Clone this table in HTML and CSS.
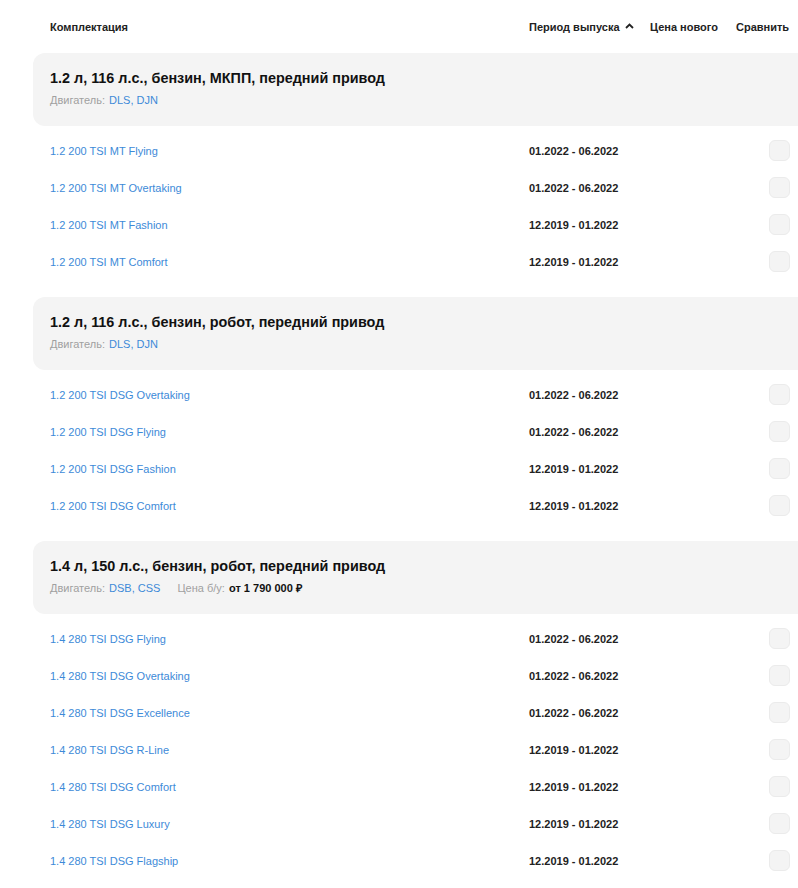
FILE: index.html
```html
<!DOCTYPE html>
<html lang="ru">
<head>
    <meta charset="UTF-8">
    <meta name="viewport" content="width=device-width, initial-scale=1.0">
    <title>Комплектации</title>
    <link rel="stylesheet" href="styles.css">
</head>
<body>
    <div class="container">
        <div class="table-head">
            <div class="col-name">Комплектация</div>
            <div class="col-period">Период выпуска
                <svg class="sort-icon" width="9" height="6" viewBox="0 0 9 6"><path d="M1 5 L4.5 1.5 L8 5" fill="none" stroke="#222" stroke-width="1.8"/></svg>
            </div>
            <div class="col-price">Цена нового</div>
            <div class="col-compare">Сравнить</div>
        </div>

        <!-- group 1 -->
        <div class="group">
            <div class="group-head">
                <div class="group-title">1.2 л, 116 л.с., бензин, МКПП, передний привод</div>
                <div class="group-info">
                    <span class="label">Двигатель:</span> <a href="#">DLS</a>, <a href="#">DJN</a>
                </div>
            </div>
            <div class="row"><a href="#" class="trim">1.2 200 TSI MT Flying</a><span class="period">01.2022 - 06.2022</span><span></span><span class="check"></span></div>
            <div class="row"><a href="#" class="trim">1.2 200 TSI MT Overtaking</a><span class="period">01.2022 - 06.2022</span><span></span><span class="check"></span></div>
            <div class="row"><a href="#" class="trim">1.2 200 TSI MT Fashion</a><span class="period">12.2019 - 01.2022</span><span></span><span class="check"></span></div>
            <div class="row"><a href="#" class="trim">1.2 200 TSI MT Comfort</a><span class="period">12.2019 - 01.2022</span><span></span><span class="check"></span></div>
        </div>

        <!-- group 2 -->
        <div class="group">
            <div class="group-head">
                <div class="group-title">1.2 л, 116 л.с., бензин, робот, передний привод</div>
                <div class="group-info">
                    <span class="label">Двигатель:</span> <a href="#">DLS</a>, <a href="#">DJN</a>
                </div>
            </div>
            <div class="row"><a href="#" class="trim">1.2 200 TSI DSG Overtaking</a><span class="period">01.2022 - 06.2022</span><span></span><span class="check"></span></div>
            <div class="row"><a href="#" class="trim">1.2 200 TSI DSG Flying</a><span class="period">01.2022 - 06.2022</span><span></span><span class="check"></span></div>
            <div class="row"><a href="#" class="trim">1.2 200 TSI DSG Fashion</a><span class="period">12.2019 - 01.2022</span><span></span><span class="check"></span></div>
            <div class="row"><a href="#" class="trim">1.2 200 TSI DSG Comfort</a><span class="period">12.2019 - 01.2022</span><span></span><span class="check"></span></div>
        </div>

        <!-- group 3 -->
        <div class="group">
            <div class="group-head">
                <div class="group-title">1.4 л, 150 л.с., бензин, робот, передний привод</div>
                <div class="group-info">
                    <span class="label">Двигатель:</span> <a href="#">DSB</a>, <a href="#">CSS</a>
                    <span class="used"><span class="label">Цена б/у:</span> <b>от 1 790 000 ₽</b></span>
                </div>
            </div>
            <div class="row"><a href="#" class="trim">1.4 280 TSI DSG Flying</a><span class="period">01.2022 - 06.2022</span><span></span><span class="check"></span></div>
            <div class="row"><a href="#" class="trim">1.4 280 TSI DSG Overtaking</a><span class="period">01.2022 - 06.2022</span><span></span><span class="check"></span></div>
            <div class="row"><a href="#" class="trim">1.4 280 TSI DSG Excellence</a><span class="period">01.2022 - 06.2022</span><span></span><span class="check"></span></div>
            <div class="row"><a href="#" class="trim">1.4 280 TSI DSG R-Line</a><span class="period">12.2019 - 01.2022</span><span></span><span class="check"></span></div>
            <div class="row"><a href="#" class="trim">1.4 280 TSI DSG Comfort</a><span class="period">12.2019 - 01.2022</span><span></span><span class="check"></span></div>
            <div class="row"><a href="#" class="trim">1.4 280 TSI DSG Luxury</a><span class="period">12.2019 - 01.2022</span><span></span><span class="check"></span></div>
            <div class="row"><a href="#" class="trim">1.4 280 TSI DSG Flagship</a><span class="period">12.2019 - 01.2022</span><span></span><span class="check"></span></div>
        </div>
    </div>
</body>
</html>
```

FILE: styles.css
```css
body {
    margin: 0;
    font-family: "Liberation Sans", Arial, sans-serif;
    color: #1a1a1a;
    background: #fff;
    overflow: hidden;
}

.container {
    padding-left: 33px;
}

.table-head,
.row {
    display: grid;
    grid-template-columns: 1fr 121px 86px 54px;
    align-items: center;
    padding: 0 8px 0 17px;
}

.table-head {
    height: 53px;
    font-size: 11px;
    font-weight: bold;
    color: #222;
}

.col-period {
    display: flex;
    align-items: center;
    gap: 5px;
}

.sort-icon {
    margin-top: -1px;
}

.group {
    margin-bottom: 17px;
}

.group-head {
    background-color: #f4f4f4;
    border-radius: 12px 0 0 12px;
    padding: 16px 17px 19px;
    margin-bottom: 6px;
}

.group-title {
    font-size: 14.4px;
    font-weight: bold;
    color: #111;
    line-height: 19px;
}

.group-info {
    margin-top: 5px;
    font-size: 11px;
    line-height: 14px;
    color: #3d8ad8;
}

.group-info a {
    color: #3d8ad8;
    text-decoration: none;
}

.label {
    color: #a0a0a0;
    margin-right: 1px;
}

.used {
    margin-left: 14px;
}

.used b {
    color: #111;
}

.row {
    height: 37px;
    font-size: 11px;
}

.trim {
    color: #3d8ad8;
    text-decoration: none;
}

.period {
    font-weight: bold;
    color: #222;
}

.check {
    justify-self: end;
    width: 19px;
    height: 19px;
    border: 1px solid #ebebeb;
    border-radius: 6px;
    background-color: #f4f4f4;
}
```
